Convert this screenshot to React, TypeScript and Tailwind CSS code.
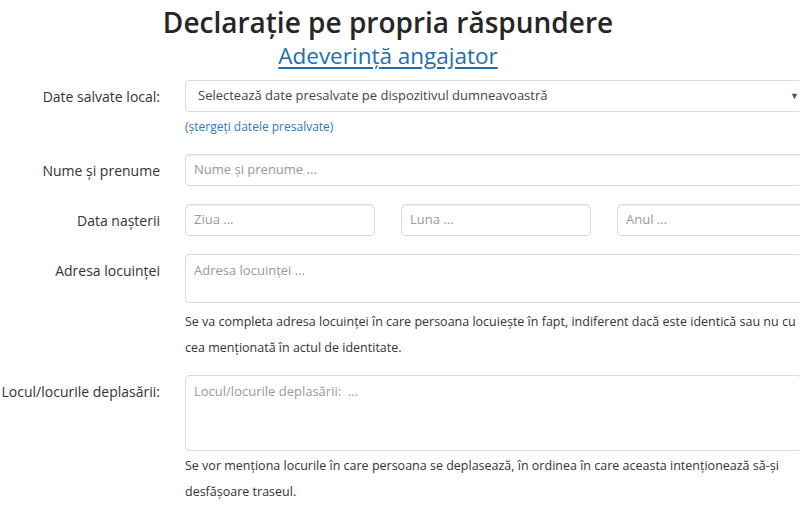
const font = { fontFamily: '"Open Sans", "Noto Sans", sans-serif' };

function Label({ children, top = false }: { children: React.ReactNode; top?: boolean }) {
  return (
    <div
      className={`w-[160px] shrink-0 text-right text-[14px] text-[#333] ${top ? 'pt-[6px]' : 'flex h-[32px] items-center justify-end'}`}
    >
      {children}
    </div>
  );
}

function Field({ placeholder, className = '' }: { placeholder: string; className?: string }) {
  return (
    <div
      className={`flex h-[32px] items-center rounded-[4px] border border-[#d9d9d9] bg-white px-[8px] text-[13px] text-[#999] shadow-[inset_0_1px_1px_rgba(0,0,0,0.06)] ${className}`}
    >
      {placeholder}
    </div>
  );
}

export default function App() {
  return (
    <div className="h-[506px] w-[800px] overflow-hidden bg-white" style={font}>
      <div className="w-[802px]">
        {/* header */}
        <div className="flex w-[776px] flex-col items-center">
          <h1 className="mt-[3px] text-[28px] font-semibold leading-[38px] text-[#262626]">
            Declarație pe propria răspundere
          </h1>
          <a href="#" className="text-[22.5px] leading-[30px] text-[#1f6fae] underline underline-offset-[3px]">
            Adeverință angajator
          </a>
        </div>

        <div className="mt-[9px] flex flex-col">
          {/* saved data */}
          <div className="flex gap-[25px]">
            <Label>Date salvate local:</Label>
            <div className="flex flex-1 flex-col">
              <div className="flex h-[32px] items-center justify-between rounded-[4px] border border-[#d9d9d9] bg-white pl-[12px] pr-[2px] text-[13px] text-[#444]">
                <span>Selectează date presalvate pe dispozitivul dumneavoastră</span>
                <span className="text-[9px] text-[#555]">▼</span>
              </div>
              <a href="#" className="mt-[6px] text-[12px] leading-[18px] text-[#2a7bbf]">
                (ștergeți datele presalvate)
              </a>
            </div>
          </div>

          {/* name */}
          <div className="mt-[18px] flex gap-[25px]">
            <Label>Nume și prenume</Label>
            <div className="flex-1">
              <Field placeholder="Nume și prenume ..." />
            </div>
          </div>

          {/* birth date */}
          <div className="mt-[18px] flex gap-[25px]">
            <Label>Data nașterii</Label>
            <div className="flex flex-1 gap-[26px]">
              <Field placeholder="Ziua ..." className="w-[190px]" />
              <Field placeholder="Luna ..." className="w-[190px]" />
              <Field placeholder="Anul ..." className="w-[190px]" />
            </div>
          </div>

          {/* address */}
          <div className="mt-[18px] flex gap-[25px]">
            <Label top>Adresa locuinței</Label>
            <div className="flex flex-1 flex-col">
              <div className="h-[49px] rounded-[4px] border border-[#d9d9d9] px-[8px] pt-[6px] text-[13px] text-[#999]">
                Adresa locuinței ...
              </div>
              <p className="mt-[6px] whitespace-nowrap text-[12.5px] leading-[26px] text-[#333]">
                Se va completa adresa locuinței în care persoana locuiește în fapt, indiferent dacă este identică sau nu cu
                <br />
                cea menționată în actul de identitate.
              </p>
            </div>
          </div>

          {/* places */}
          <div className="mt-[14px] flex gap-[25px]">
            <Label top>Locul/locurile deplasării:</Label>
            <div className="flex flex-1 flex-col">
              <div className="h-[76px] rounded-[4px] border border-[#d9d9d9] px-[8px] pt-[6px] text-[13px] text-[#999]">
                Locul/locurile deplasării: &nbsp;...
              </div>
              <p className="mt-[2px] whitespace-nowrap text-[12.5px] leading-[26px] text-[#333]">
                Se vor menționa locurile în care persoana se deplasează, în ordinea în care aceasta intenționează să-și
                <br />
                desfășoare traseul.
              </p>
            </div>
          </div>
        </div>
      </div>
    </div>
  );
}
